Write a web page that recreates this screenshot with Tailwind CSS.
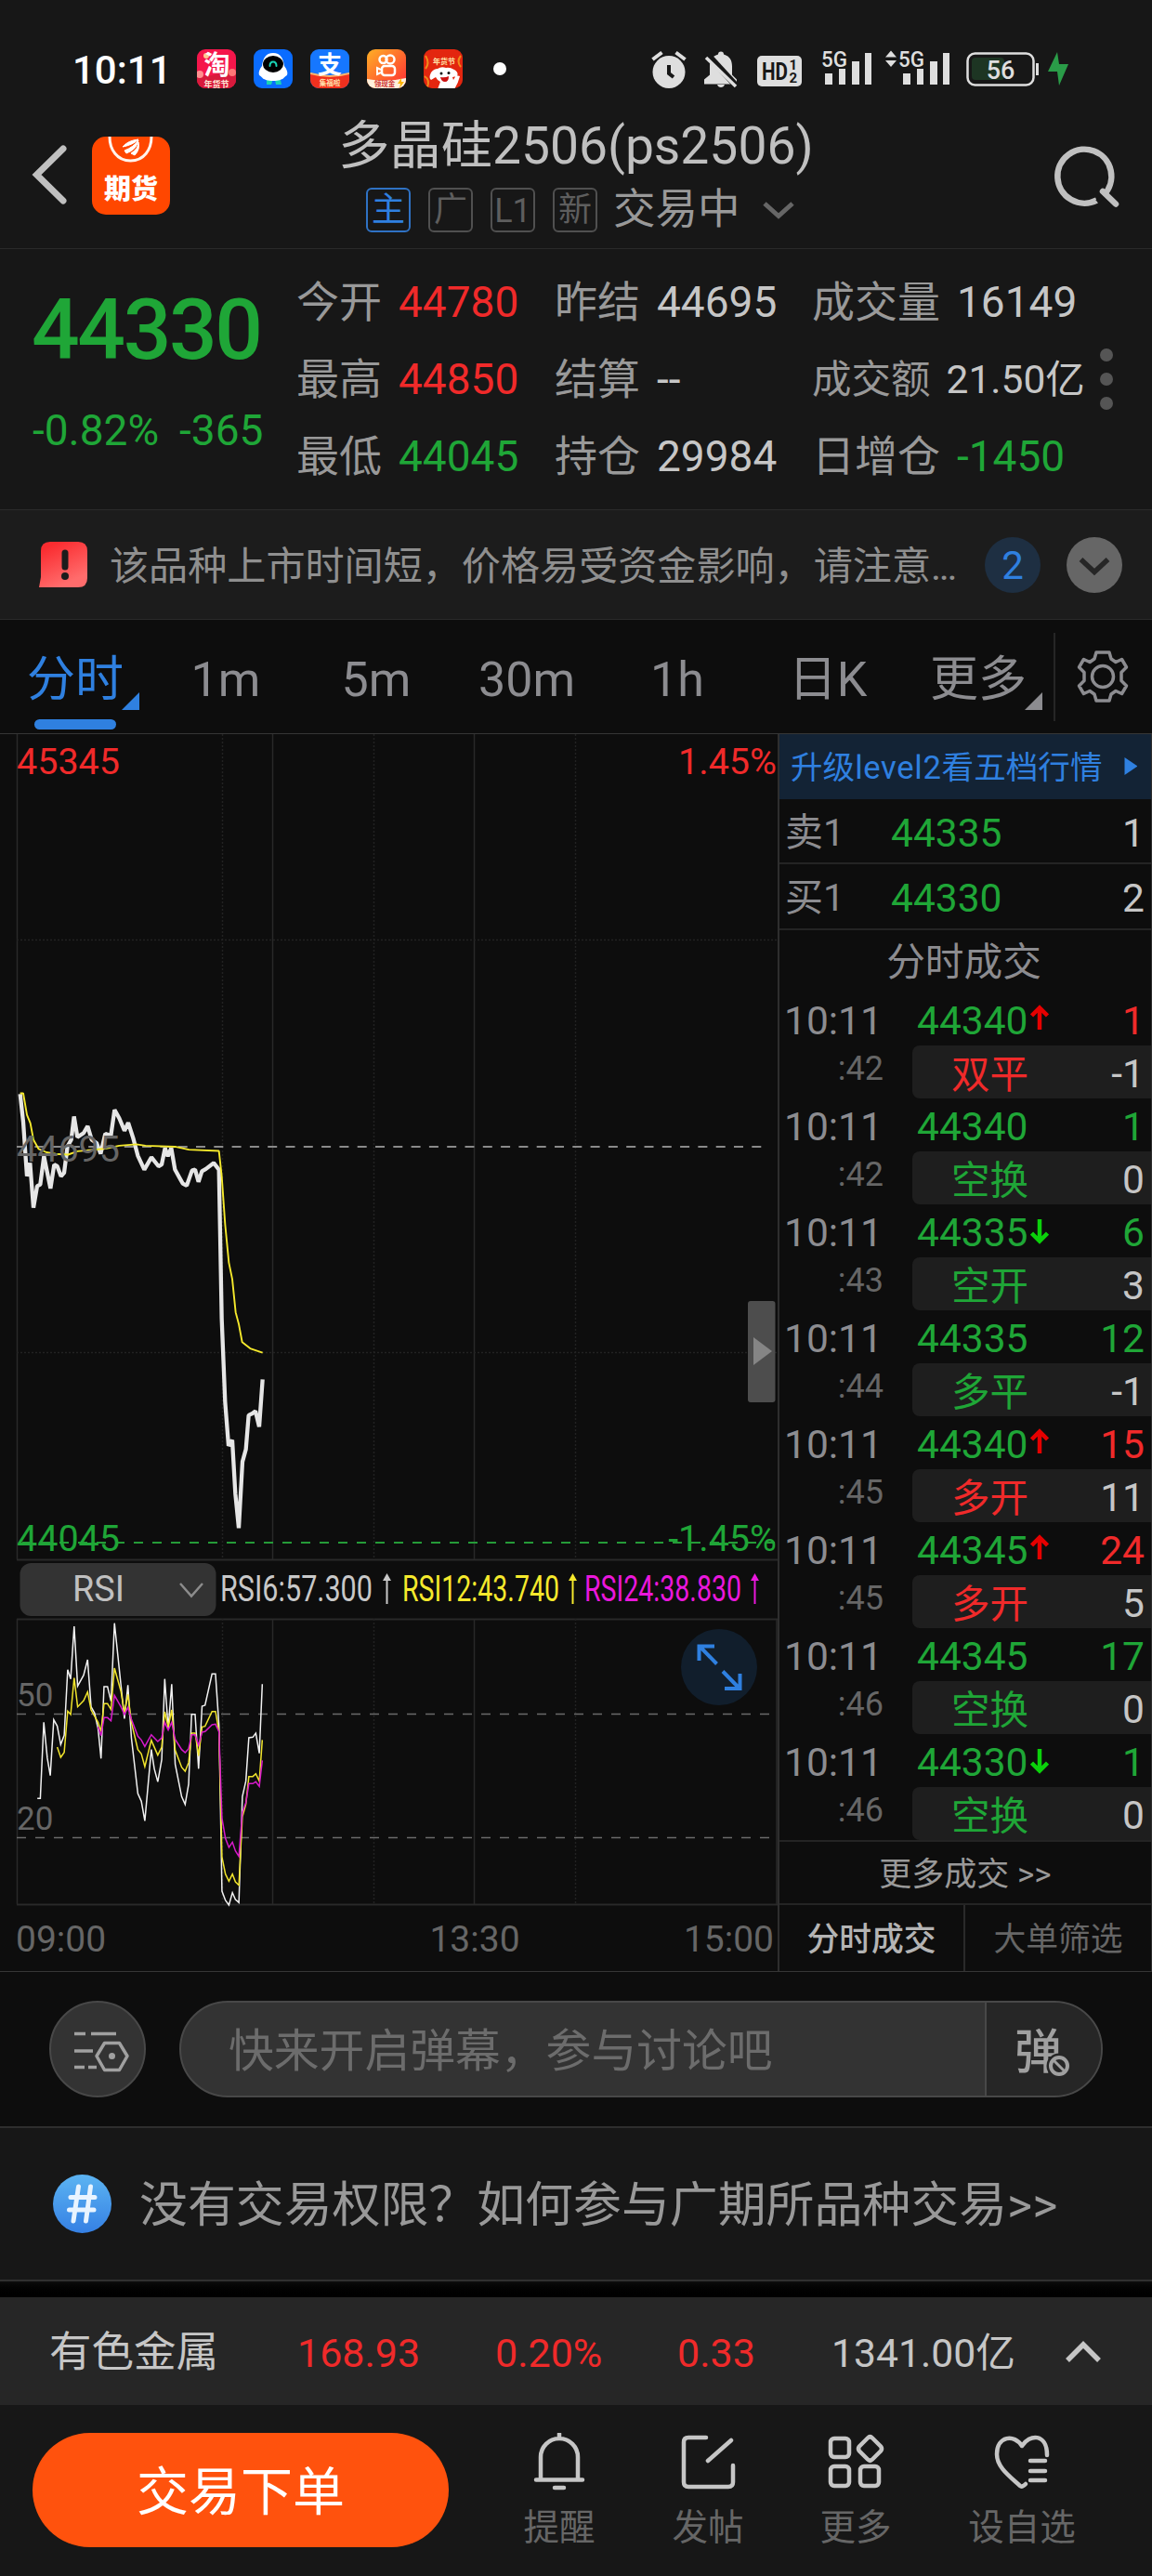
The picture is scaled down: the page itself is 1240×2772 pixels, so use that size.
<!DOCTYPE html>
<html lang="zh-CN">
<head>
<meta charset="utf-8">
<title>多晶硅2506</title>
<script src="https://cdn.jsdelivr.net/npm/@tailwindcss/browser@4"></script>
</head>
<body class="w-[1240px] h-[2772px] overflow-hidden bg-[#0d0d0d] font-['Roboto','Noto_Sans_CJK_SC',sans-serif] text-[#c0c0c0] whitespace-nowrap">
<div class="flex flex-col w-[1240px] h-[2772px]">

<!-- status bar + navigation -->
<header class="h-[268px] shrink-0 bg-[#171717] border-b border-[#2a2a2a] flex flex-col">
  <div class="h-[116px] pt-[34px] flex">
    <div class="w-[212px] h-[84px] pl-[78px] leading-[84px] text-[42px] font-medium text-white">10:11</div>
    <svg class="w-[350px] h-[82px] shrink-0" viewBox="212 34 350 82">
      <defs>
        <linearGradient id="ks" x1="0" y1="0" x2="1" y2="1"><stop offset="0" stop-color="#ffb025"/><stop offset="1" stop-color="#ff2b35"/></linearGradient>
        <clipPath id="c1"><rect x="212" y="53" width="42" height="42" rx="9"/></clipPath>
        <clipPath id="c3"><rect x="334" y="53" width="42" height="42" rx="9"/></clipPath>
        <clipPath id="c4"><rect x="395" y="53" width="42" height="42" rx="9"/></clipPath>
        <clipPath id="c5"><rect x="456" y="53" width="42" height="42" rx="9"/></clipPath>
      </defs>
      <g clip-path="url(#c1)"><rect x="212" y="53" width="42" height="42" fill="#f5164b"/><path d="M212 78q10 6 20 2t22-4v20h-42z" fill="#d81a3c"/><circle cx="215" cy="80" r="4" fill="#ff8f8f"/><circle cx="250" cy="78" r="4" fill="#f77"/><circle cx="222" cy="60" r="3" fill="#ffc890"/>
      <text x="233.500" y="80" font-size="28" font-weight="700" text-anchor="middle" fill="#fff">淘</text><text x="233" y="93.500" font-size="9" font-weight="700" text-anchor="middle" fill="#ffe9d8">年货节</text></g>
      <rect x="273" y="53" width="42" height="42" rx="9" fill="#0a6cff"/>
      <path d="M287 86h6v2l-1 3h-5zM296 86h6l1 5h-6z" fill="#19d3b5"/>
      <path d="M294 57c8 0 11 6 12 14 3 4 4 7 3 10-3 1-3 6-15 6s-12-5-15-6c-1-3 0-6 3-10 1-8 4-14 12-14z" fill="#fff"/>
      <ellipse cx="294" cy="69" rx="11" ry="9" fill="#000"/><path d="M290.500 71c0-6 7-6 7 0" stroke="#19d3b5" stroke-width="2" fill="none" stroke-linecap="round"/>
      <g clip-path="url(#c3)"><rect x="334" y="53" width="42" height="42" fill="#1677ff"/><path d="M334 79q21 6 42 0v17h-42z" fill="#f0301e"/><path d="M334 79q21 6 42 0" stroke="#ffb469" stroke-width="2" fill="none"/><text x="355" y="79" font-size="26" font-weight="700" text-anchor="middle" fill="#fff">支</text><text x="355" y="92" font-size="7.500" font-weight="700" text-anchor="middle" fill="#ffe3b0">集福啦</text></g>
      <g clip-path="url(#c4)"><rect x="395" y="53" width="42" height="42" fill="url(#ks)"/><circle cx="412.500" cy="64" r="4" fill="none" stroke="#fff" stroke-width="2.500"/><circle cx="420" cy="64" r="4.500" fill="none" stroke="#fff" stroke-width="2.500"/><rect x="411" y="71" width="14" height="10" rx="3" fill="none" stroke="#fff" stroke-width="2.500"/><path d="M410 75l-4-2v7l4-2" fill="none" stroke="#fff" stroke-width="2"/><path d="M395 85q20 4 42-1v12h-42z" fill="#fff0dc"/><text x="414" y="93" font-size="7.500" font-weight="700" text-anchor="middle" fill="#c33">领现金</text><path d="M432 84l-4 6h3l-1 5 5-7h-3z" fill="#ffb400"/></g>
      <g clip-path="url(#c5)"><rect x="456" y="53" width="42" height="42" fill="#e3260f"/><path d="M458 60q5 8 0 14M496 60q-5 6 0 12M457 82q6 4 3 12" stroke="#f08a1c" stroke-width="2" fill="none"/><text x="478" y="69" font-size="8" font-weight="700" text-anchor="middle" fill="#ffe3a8">年货节</text><path d="M464 78q-3 6 0 8l5-3q2 4 5 5l-3 8h18q4-6 6-14l-4-1-3 5-1-3 5-1q2-4-3-7-5-3-9-2-5-2-9 1-4 0-7 4z" fill="#fff"/><circle cx="475" cy="79" r="1.500" fill="#111"/><circle cx="483" cy="78.500" r="1.500" fill="#111"/><path d="M474 83q5 1 9-1 0 6-4 6t-5-5z" fill="#c11"/></g>
      <circle cx="538" cy="74" r="7" fill="#fff"/>
    </svg>
    <svg class="w-[478px] h-[82px] shrink-0 ml-[118px]" viewBox="680 34 478 82" fill="#dedede">
      <circle cx="720" cy="77.500" r="17.500"/><path d="M702.500 64l10-7.500M737.500 64l-10-7.500" stroke="#dedede" stroke-width="4"/><path d="M720 70v9l5 4" stroke="#171717" stroke-width="4" fill="none"/>
      <path d="M773 58.500q0-3 3-3t3 3c7 2 9 7 9 13v9l5 5v5h-35v-5l6-5v-9c0-6 2-11 9-13zM772 91h8q-1 3-4 3t-4-3z"/><path d="M760 57l34 37" stroke="#171717" stroke-width="7"/><path d="M760 62l32 31" stroke="#dedede" stroke-width="3.500"/>
      <rect x="815" y="60" width="48" height="33" rx="5"/><text x="820" y="85.500" font-size="25" font-weight="700" fill="#171717" textLength="28" lengthAdjust="spacingAndGlyphs">HD</text><text x="849.500" y="75" font-size="15" font-weight="700" fill="#171717">1</text><text x="849.500" y="89" font-size="15" font-weight="700" fill="#171717">2</text>
      <text x="884" y="72" font-size="24" font-weight="500" textLength="28" lengthAdjust="spacingAndGlyphs">5G</text>
      <path d="M888 79h8v12h-8zM903 74h7v17h-7zM917 66h8v25h-8zM931 57h7v34h-7z"/>
      <path d="M953 61.500l6-7 6 7zM953 65l6 7 6-7z"/>
      <text x="967" y="72" font-size="24" font-weight="500" textLength="28" lengthAdjust="spacingAndGlyphs">5G</text>
      <path d="M972 79h8v12h-8zM987 74h7v17h-7zM1001 66h8v25h-8zM1015 57h7v34h-7z"/>
      <rect x="1041.500" y="57.500" width="71" height="34" rx="8" fill="none" stroke="#dedede" stroke-width="2.500"/><rect x="1046" y="62" width="35" height="24" rx="4" fill="#1d3523"/><path d="M1115 68h3v13h-3z"/>
      <text x="1077" y="85" font-size="27" text-anchor="middle" font-weight="500">56</text>
      <path d="M1138 56l-10 21h10l2 15 10-23h-10z" fill="#2a9c48"/>
    </svg>
  </div>
  <div class="h-[151px] flex">
    <svg class="w-[340px] h-[151px] shrink-0" viewBox="0 116 340 151">
      <path d="M68 160L39.500 188L68 216" fill="none" stroke="#c0c0c0" stroke-width="7" stroke-linecap="round"/>
      <rect x="99" y="147" width="84" height="84" rx="15" fill="#ff4700"/>
      <path d="M118 147c0 14 8 26 22.500 26s22.500-12 22.500-26" fill="none" stroke="#fff3ec" stroke-width="3"/>
      <path d="M132 158q6-7 17-8-6 6-17 8zM134 162q10-4 15-11-2 10-13 14zM141 165q8-5 8-12 2 8-4 14z" fill="#fff" stroke="#fff" stroke-width="1"/>
      <text x="141" y="214" font-size="29" font-weight="900" text-anchor="middle" fill="#fff">期货</text>
    </svg>
    <div class="w-[560px] flex flex-col items-center">
      <div class="h-[82px] leading-[82px] text-[55.200px]">多晶硅2506(ps2506)</div>
      <div class="h-[56px] w-[560px] pl-[54px] flex items-center text-[#5e5e5e] text-[36px]">
        <span class="w-12 h-12 mr-[19px] rounded-md border-2 border-[#2f72c4] text-[#2f80e0] leading-[44px] text-center">主</span>
        <span class="w-12 h-12 mr-[19px] rounded-md border-2 border-[#505050] leading-[44px] text-center">广</span>
        <span class="w-12 h-12 mr-[19px] rounded-md border-2 border-[#505050] leading-[46px] text-center">L1</span>
        <span class="w-12 h-12 mr-[17px] rounded-md border-2 border-[#505050] leading-[44px] text-center">新</span>
        <span class="text-[45.500px] leading-[54px] text-[#999]">交易中</span>
        <svg class="w-10 h-6 ml-[21px]" viewBox="0 0 40 24"><path d="M5 5l15 13.500L35 5" fill="none" stroke="#666" stroke-width="5"/></svg>
      </div>
    </div>
    <svg class="w-[340px] h-[151px] shrink-0" viewBox="900 116 340 151" fill="none" stroke="#c0c0c0" stroke-width="6.500"><path d="M1180.500 215.500A29 29 0 1 1 1188 210"/><path d="M1181 217l9-8" stroke="#171717" stroke-width="5"/><path d="M1187 206l14 13.500" stroke-linecap="round"/></svg>
  </div>
</header>

<!-- quote -->
<section class="h-[281px] shrink-0 bg-[#171717] border-b border-[#2a2a2a] pt-[15px] flex text-[46px]">
  <div class="w-[319px] text-[#1fa637]">
    <div class="h-[144px] leading-[144px] pl-[34px] text-[91px] font-medium tracking-[-2.400px]">44330</div>
    <div class="h-[60px] leading-[60px] pl-[35px] mt-[6px] flex gap-[22px]"><span>-0.82%</span><span>-365</span></div>
  </div>
  <div class="grid grid-cols-[278px_277px_300px] grid-rows-[83px_83px_83px] leading-[84px] h-[249px] text-[#999]">
    <div class="flex gap-[18px]">今开<span class="text-[#f02a2a]">44780</span></div>
    <div class="flex gap-[18px]">昨结<span class="text-[#c6c6c6]">44695</span></div>
    <div class="flex gap-[18px]">成交量<span class="text-[#c6c6c6]">16149</span></div>
    <div class="flex gap-[18px]">最高<span class="text-[#f02a2a]">44850</span></div>
    <div class="flex gap-[18px]">结算<span class="text-[#c6c6c6]">--</span></div>
    <div class="flex gap-[17px] text-[42.500px] leading-[86px]">成交额<span class="text-[#c6c6c6]">21.50亿</span></div>
    <div class="flex gap-[18px]">最低<span class="text-[#1fa637]">44045</span></div>
    <div class="flex gap-[18px]">持仓<span class="text-[#c6c6c6]">29984</span></div>
    <div class="flex gap-[18px]">日增仓<span class="text-[#1fa637]">-1450</span></div>
  </div>
  <div class="pt-[92px] pl-[10px] flex flex-col gap-3"><i class="size-[14px] rounded-full bg-[#555]"></i><i class="size-[14px] rounded-full bg-[#555]"></i><i class="size-[14px] rounded-full bg-[#555]"></i></div>
</section>

<!-- notice -->
<section class="h-[118px] shrink-0 bg-[#1c1c1c] border-b border-[#2a2a2a] flex items-center pl-[42px]">
  <svg class="w-[53px] h-[50px] mr-[23px]" viewBox="0 0 53 50"><defs><linearGradient id="al" x1="0.200" y1="0.100" x2="0.600" y2="0.900"><stop offset="0" stop-color="#fa2c30"/><stop offset="1" stop-color="#ff6c6c"/></linearGradient></defs><path d="M12 0H42Q52 0 52 10V39Q52 49 42 49H0L2 38V10Q2 0 12 0Z" fill="url(#al)"/><path d="M28 12v15" stroke="#1c1c1c" stroke-width="7" stroke-linecap="round"/><circle cx="28" cy="37" r="4" fill="#1c1c1c"/></svg>
  <p class="w-[942px] text-[42.100px] leading-[60px] mt-[4px] text-[#8f8f8f]">该品种上市时间短，价格易受资金影响，请注意<span class="tracking-[-2.300px]">...</span></p>
  <span class="size-[60px] rounded-full bg-[#1e2f42] text-[#2f80e0] text-[42px] leading-[61px] text-center">2</span>
  <svg class="size-[60px] ml-[28px]" viewBox="0 0 60 60"><circle cx="30" cy="30" r="30" fill="#666"/><path d="M15.500 24L30 37.500L44.500 24" fill="none" stroke="#262626" stroke-width="5.500"/></svg>
</section>

<!-- period tabs -->
<nav class="h-[123px] shrink-0 border-b border-[#363636] flex text-[52px] leading-[129px] text-[#8c8c90] text-center">
  <div class="w-[162px] relative text-[#2f80e0]">分时<i class="absolute left-[131px] top-[78px] size-[19px] bg-[#2f80e0] [clip-path:polygon(100%_0,100%_100%,0_100%)]"></i><i class="absolute left-[37px] top-[107px] w-[88px] h-[11px] rounded-full bg-[#2f80e0]"></i></div>
  <div class="w-[162px]">1m</div><div class="w-[162px]">5m</div><div class="w-[162px]">30m</div><div class="w-[162px]">1h</div><div class="w-[162px]">日K</div>
  <div class="w-[162px] relative">更多<i class="absolute left-[131px] top-[78px] size-[19px] bg-[#8c8c90] [clip-path:polygon(100%_0,100%_100%,0_100%)]"></i></div>
  <div class="w-[2px] h-[95px] mt-[14px] bg-[#262626]"></div>
  <svg class="size-[60px] ml-[21px] mt-[31px]" viewBox="-30 -30 60 60" fill="none" stroke="#8c8c90" stroke-width="3.500" stroke-linejoin="round"><circle r="11.500"/><path d="M-7-26H7L9-19L14-15.500L20.500-18.500L25.500-10L20-4.500V4.500L25.500 10L20.500 18.500L14 15.500L9 19L7 26H-7L-9 19L-14 15.500L-20.500 18.500L-25.500 10L-20 4.500V-4.500L-25.500-10L-20.500-18.500L-14-15.500L-9-19Z"/></svg>
</nav>

<!-- chart + order book -->
<main class="h-[1332px] shrink-0 border-b border-[#363636] flex">
  <svg class="w-[837px] h-[1331px] shrink-0" viewBox="0 790 837 1331">
    <g stroke="#292929" stroke-width="1.500" fill="none">
      <path d="M18.500 790V1678M293.500 790V1678M510.500 790V1678M18.500 1742V2049M293.500 1742V2049M510.500 1742V2049M836 1742V2049"/>
      <path d="M18 1678.500H837M18 1742.500H837M18 2049.500H837" stroke-width="2"/>
      <path d="M239.500 790V1678M402.500 790V1678M619.500 790V1678M239.500 1742V2049M402.500 1742V2049M619.500 1742V2049M18 1011.500H837M18 1455.500H837" stroke="#222" stroke-dasharray="2 2"/>
    </g>
    <path d="M18 1234H828" stroke="#8a8a8a" stroke-width="2" stroke-dasharray="10 9.300"/>
    <path d="M24 1660H836" stroke="#259b38" stroke-width="2" stroke-dasharray="10 10"/>
    <path d="M18 1844.500H828M18 1977.500H828" stroke="#6a6a6a" stroke-width="1.500" stroke-dasharray="10 10"/>
    <g fill="none" stroke-linejoin="bevel" transform="translate(0 1130) scale(.33333 .35714)">
      <polyline vector-effect="non-scaling-stroke" stroke="#e6e6e6" stroke-width="4.300" points="65,132 75,216 87,380 97,340 108,475 120,410 130,405 142,320 163,417 175,345 185,350 197,380 207,370 218,290 230,270 239,200 250,262 270,250 283,229 296,270 312,280 325,312 340,252 358,258 370,180 385,205 402,243 414,219 430,265 445,318 466,360 489,323 512,350 522,345 533,295 542,320 553,295 565,360 590,402 603,408 620,363 630,360 641,397 652,365 665,358 690,340 707,360 716,810 727,1060 738,1192 750,1175 760,1337 771,1440 783,1240 794,1203 803,1100 815,1095 825,1088 837,1135 848,992"/>
      <polyline vector-effect="non-scaling-stroke" stroke="#f5e92c" stroke-width="1.900" points="65,130 75,130 87,195 98,220 108,270 125,298 150,308 180,313 220,315 250,305 340,297 385,288 440,284 470,288 565,291 610,300 707,304 716,380 727,525 739,640 750,690 761,790 771,825 782,880 808,899 848,912"/>
    </g>
    <g font-size="39.500">
      <text x="18" y="832.500" fill="#f02a2a">45345</text><text x="836" y="832.500" text-anchor="end" fill="#f02a2a">1.45%</text>
      <text x="18" y="1250" fill="#666">44695</text>
      <text x="18" y="1668.500" fill="#1fa637">44045</text><text x="836" y="1668.500" text-anchor="end" fill="#1fa637">-1.45%</text>
    </g>
    <rect x="21.500" y="1682" width="211" height="57" rx="12" fill="#333"/>
    <text x="78" y="1723" font-size="39" fill="#c0c0c0" textLength="56" lengthAdjust="spacingAndGlyphs">RSI</text>
    <path d="M194 1704l12 13.500 12-13.500" fill="none" stroke="#8c8c8c" stroke-width="2.500"/>
    <g font-size="39">
      <text x="237" y="1723" fill="#c8c8c8" textLength="164" lengthAdjust="spacingAndGlyphs">RSI6:57.300</text>
      <text x="433" y="1723" fill="#f5e92c" textLength="169" lengthAdjust="spacingAndGlyphs">RSI12:43.740</text>
      <text x="629" y="1723" fill="#ea17dc" textLength="169" lengthAdjust="spacingAndGlyphs">RSI24:38.830</text>
    </g>
    <g stroke-width="2"><path d="M416.500 1726V1697" stroke="#c8c8c8"/><path d="M412 1701l4.500-8 4.500 8z" fill="#c8c8c8"/><path d="M616.500 1726V1697" stroke="#f5e92c"/><path d="M612 1701l4.500-8 4.500 8z" fill="#f5e92c"/><path d="M812.500 1726V1697" stroke="#ea17dc"/><path d="M808 1701l4.500-8 4.500 8z" fill="#ea17dc"/></g>
    <g font-size="35" fill="#666"><text x="18" y="1835.500">50</text><text x="18" y="1968.500">20</text></g>
    <g fill="none" stroke-width="1.500" transform="translate(0 1640) scale(.53571 .33333)">
      <polyline vector-effect="non-scaling-stroke" stroke="#f2f2f2" points="75,886 81,886 88,640 95,755 101,812 108,632 115,652 122,712 129,682 136,470 142,500 149,330 156,523 168,488 176,438 183,590 190,610 197,660 203,757 209,525 216,525 223,572 230,320 243,520 250,628 257,520 264,690 277,870 284,895 291,958 304,728 310,790 317,832 325,760 331,500 338,660 345,517 352,775 365,880 372,905 379,840 385,614 392,614 399,790 406,588 412,585 426,484 433,484 440,650 446,1185 453,1215 460,1230 467,1190 473,1212 480,1222 487,880 494,830 500,690 508,688 514,675 521,740 527,517"/>
      <polyline vector-effect="non-scaling-stroke" stroke="#f0e42c" points="115,720 122,753 129,737 136,604 142,615 149,497 156,590 168,570 176,542 183,600 197,640 203,670 209,580 216,580 223,598 230,465 243,540 250,610 257,550 264,640 277,728 284,742 291,783 304,698 317,746 325,720 331,606 338,655 345,600 352,730 365,785 372,798 379,770 385,675 392,675 399,748 406,655 412,653 426,605 433,605 440,670 446,1075 453,1130 460,1153 467,1130 473,1155 480,1166 487,945 494,905 500,815 508,815 514,806 521,830 527,697"/>
      <polyline vector-effect="non-scaling-stroke" stroke="#d81acb" points="197,655 203,683 209,625 216,625 223,635 230,553 243,590 250,615 257,592 264,630 277,685 284,697 291,718 304,680 317,702 325,690 331,640 338,665 345,640 352,695 365,728 372,738 379,725 385,680 392,680 399,714 406,672 412,670 426,648 433,646 440,670 446,950 453,1015 460,1044 467,1027 473,1055 480,1073 487,930 494,900 500,838 508,838 514,832 521,847 527,763"/>
    </g>
    <g font-size="39" fill="#666"><text x="17" y="2100">09:00</text><text x="511" y="2100" text-anchor="middle">13:30</text><text x="833" y="2100" text-anchor="end">15:00</text></g>
    <circle cx="774" cy="1794" r="41" fill="#111e2c"/>
    <path d="M771.500 1790.500L753 1771.500M752.500 1787V1771.500H769M778 1798.500L796 1817M796.500 1801V1817H780" fill="none" stroke="#2f80e0" stroke-width="4"/>
    <rect x="805" y="1400" width="29.500" height="109" rx="3" fill="#4d4d4d"/><path d="M811 1439l20 15-20 15z" fill="#858585"/>
  </svg>

  <aside class="w-[403px] border-l-2 border-r border-[#2e2e2e] flex flex-col text-[42.500px] text-[#8c8c90]">
    <div class="h-[70px] bg-[#132335] text-[#2f80e0] text-[34.600px] leading-[73px] pl-[12px] flex">升级<span class="tracking-[0.700px]">level2</span>看五档行情<i class="ml-[24px] mt-[25px] w-[14px] h-[19px] bg-[#2f80e0] [clip-path:polygon(0_0,100%_50%,0_100%)]"></i></div>
    <div class="h-[70px] leading-[73px] border-b-2 border-[#242424] pl-[6px] pr-[7px] flex text-[#c6c6c6]"><span class="w-[114px] text-[41px] text-[#8c8c90]">卖1</span><span class="flex-1 text-[#1fa637]">44335</span>1</div>
    <div class="h-[71px] leading-[73px] border-b-2 border-[#242424] pl-[6px] pr-[7px] flex text-[#c6c6c6]"><span class="w-[114px] text-[41px] text-[#8c8c90]">买1</span><span class="flex-1 text-[#1fa637]">44330</span>2</div>
    <div class="h-[67px] leading-[70px] text-center text-[41.700px] pr-[3px]">分时成交</div>
    <div id="trades" class="h-[912px]"></div>
    <div class="h-[70px] leading-[71px] border-y-2 border-[#242424] text-center text-[35px] text-[#999]">更多成交 &gt;&gt;</div>
    <div class="h-[71px] leading-[75px] flex text-center text-[34.800px]"><span class="w-[200px] border-r-2 border-[#2a2a2a] text-[#b4b4b4] font-medium">分时成交</span><span class="w-[200px]">
      <span class="text-[#666]">大单筛选</span></span></div>
  </aside>
</main>

<!-- live comments -->
<section class="h-[168px] shrink-0 border-b-2 border-[#2e2e2e] flex items-center pl-[53px]">
  <svg class="size-[104px]" viewBox="53 2152 104 104" fill="none" stroke="#a0a0a0" stroke-width="3.500"><circle cx="105" cy="2204" r="51" fill="#333" stroke="#484848" stroke-width="2"/><path d="M80 2187.500H92M98 2187.500H125M80 2206H100M80 2223.500H91M95 2223.500H104"/><path d="M112.500 2197.500H128.500L137 2211.500L128.500 2226.500H112.500L104 2211.500Z" stroke-linejoin="round"/><circle cx="120.500" cy="2211.500" r="3.500" fill="#a0a0a0" stroke="none"/></svg>
  <div class="w-[994px] h-[104px] ml-[36px] rounded-full border-2 border-[#484848] bg-[#333] overflow-hidden flex">
    <div class="w-[867px] pl-[51px] text-[48.800px] leading-[105px] text-[#6c6c6c]">快来开启弹幕，参与讨论吧</div>
    <div class="w-[125px] border-l-2 border-[#484848] bg-[#262626]"><svg class="w-[123px] h-[100px]" viewBox="1064 2154 123 100"><text x="1094" y="2225" font-size="51" font-weight="500" fill="#a0a0a0">弹</text><circle cx="1142" cy="2222" r="13.500" fill="#262626"/><circle cx="1142" cy="2222" r="9" fill="none" stroke="#a0a0a0" stroke-width="4"/><path d="M1136 2216l12 12" stroke="#a0a0a0" stroke-width="3"/></svg></div>
  </div>
</section>

<!-- topic -->
<section class="h-[165px] shrink-0 bg-[#171717] border-b-2 border-[#303030] flex items-center pl-[57px] text-[#999] text-[51.900px] leading-[80px]">
  <svg class="size-[63px] mr-[30px]" viewBox="0 0 63 63"><defs><linearGradient id="tp" x1="0" y1="0" x2="0" y2="1"><stop offset="0" stop-color="#5cb4f2"/><stop offset="1" stop-color="#3580e4"/></linearGradient></defs><circle cx="31.500" cy="31.500" r="31.500" fill="url(#tp)"/><path d="M27.500 13L22 50M40.500 13L35.500 50M19 24.500H45M17.500 38H44" stroke="#e9f4ff" stroke-width="5" stroke-linecap="round"/></svg>
  <span class="mt-[4px]">没有交易权限？如何参与广期所品种交易&gt;&gt;</span>
</section>
<div class="h-[17px] shrink-0 bg-linear-to-b from-[#0d0d0d] to-black"></div>

<!-- sector index -->
<section class="h-[116px] shrink-0 bg-[#262626] pl-[53px] grid grid-cols-[267px_213px_196px_166px_1fr] items-center leading-[120px] text-[43px] text-[#f02a2a]">
  <span class="text-[45.500px] text-[#c6c6c6]">有色金属</span><span>168.93</span><span>0.20%</span><span>0.33</span>
  <span class="text-[#c6c6c6] flex items-center"><span class="text-[42.700px]">1341.00亿</span><svg class="w-10 h-7 ml-[53px]" viewBox="0 0 40 28"><path d="M3 22L20 5L37 22" fill="none" stroke="#c6c6c6" stroke-width="5.500"/></svg></span>
</section>

<!-- bottom actions -->
<footer class="h-[184px] shrink-0 bg-[#171717] pl-[35px] pt-[30px] flex text-[38.500px] text-[#666] text-center">
  <button class="w-[448px] h-[123px] rounded-full bg-[#ff520d] text-white text-[56px] leading-[129px] mr-[39px]">交易下单</button>
  <div class="w-[160px] flex flex-col items-center"><svg class="size-[64px]" viewBox="-32 -32 64 64" fill="none" stroke="#c6c6c6" stroke-width="4.500" stroke-linecap="round"><path d="M0-27V-31M-20 18V-6A20 20 0 0 1 20-6V18M-25 18.500H25M-5 27H5"/></svg><span class="leading-[76px]">提醒</span></div>
  <div class="w-[160px] flex flex-col items-center"><svg class="size-[64px]" viewBox="-32 -32 64 64" fill="none" stroke="#c6c6c6" stroke-width="4.500" stroke-linecap="round"><path d="M-2-27H-21Q-26-27-26-22V21Q-26 26-21 26H22Q27 26 27 21V3M25-24L0-2"/></svg><span class="leading-[76px]">发帖</span></div>
  <div class="w-[158px] flex flex-col items-center"><svg class="size-[64px]" viewBox="-32 -32 64 64" fill="none" stroke="#c6c6c6" stroke-width="4.500"><rect x="-27" y="-26" width="20" height="20" rx="4"/><rect x="-27" y="4" width="20" height="21" rx="4"/><rect x="5" y="4" width="20" height="21" rx="4"/><path d="M13-26.500Q15.500-29 18-26.500L27-17.500Q29-15 27-12.500L18-3.500Q15.500-1 13-3.500L4-12.500Q2-15 4-17.500Z"/></svg><span class="leading-[76px]">更多</span></div>
  <div class="w-[200px] flex flex-col items-center"><svg class="size-[64px]" viewBox="-32 -32 64 64" fill="none" stroke="#c6c6c6" stroke-width="4.500" stroke-linecap="round"><path d="M27-8C27-32 8-31 0-18C-8-31-27-29-27-9C-27 5-13 15-2 25Q0 27 4 23" stroke-linejoin="round"/><path d="M9-2H25M9 9H25M9 19H25"/></svg><span class="leading-[76px]">设自选</span></div>
</footer>
</div>

<script>
const up = '<svg class="w-5 h-[28px] ml-[3px] mt-[13px]" viewBox="0 0 20 28" fill="none" stroke="#e60000" stroke-width="4.500"><path d="M10 27V4M1.500 12L10 3.500L18.500 12"/></svg>';
const down = '<svg class="w-5 h-[28px] ml-[3px] mt-[15px]" viewBox="0 0 20 28" fill="none" stroke="#0bd10b" stroke-width="4.500"><path d="M10 1V24M1.500 16L10 24.500L18.500 16"/></svg>';
const red = 'text-[#f02a2a]', green = 'text-[#1fa637]';
const rows = [
  ['44340', up, '1', red, '42', '双平', red, '-1'],
  ['44340', '', '1', green, '42', '空换', green, '0'],
  ['44335', down, '6', green, '43', '空开', green, '3'],
  ['44335', '', '12', green, '44', '多平', green, '-1'],
  ['44340', up, '15', red, '45', '多开', red, '11'],
  ['44345', up, '24', red, '45', '多开', red, '5'],
  ['44345', '', '17', green, '46', '空换', green, '0'],
  ['44330', down, '1', green, '46', '空换', green, '0']
];
document.getElementById('trades').innerHTML = rows.map(([price, arrow, qty, qc, sec, kind, kc, delta]) => `
  <div class="h-[57px] leading-[62px] pl-[5px] pr-[7px] flex"><span class="w-[143px]">10:11</span><span class="flex flex-1 text-[#1fa637]">${price}${arrow}</span><span class="${qc}">${qty}</span></div>
  <div class="h-[57px] flex"><span class="w-[143px] pr-[31px] text-right text-[36px] leading-[50px] text-[#666]">:${sec}</span><span class="flex-1 rounded-l-lg bg-[#1e1e1e] pl-[42px] pr-[7px] leading-[61px] flex justify-between text-[#c6c6c6]"><span class="text-[41.500px] leading-[63px] ${kc}">${kind}</span>${delta}</span></div>`).join('');
</script>
</body>
</html>
